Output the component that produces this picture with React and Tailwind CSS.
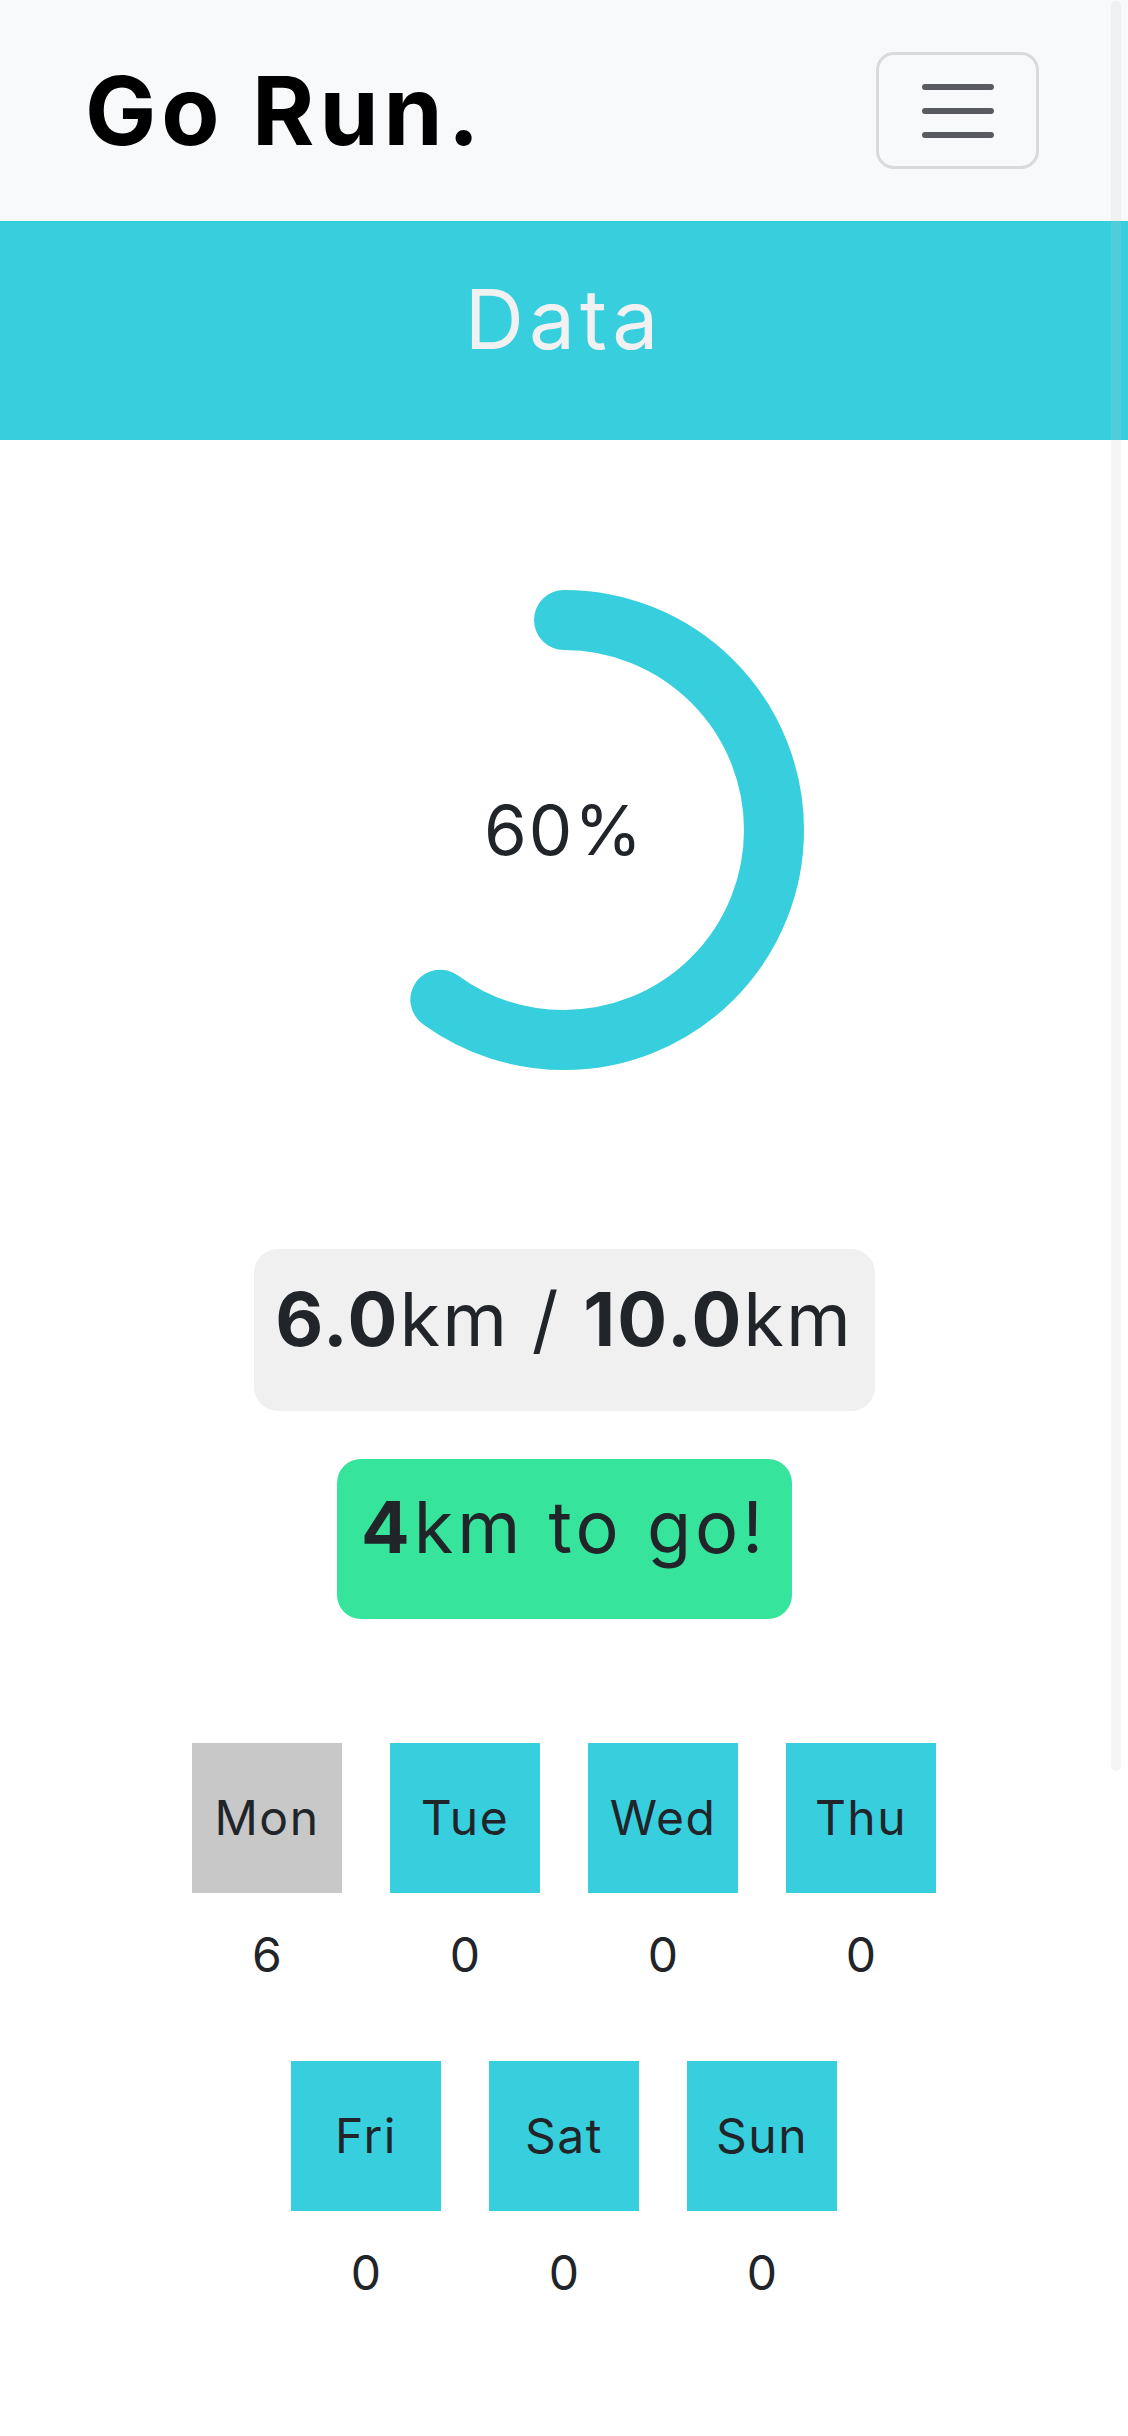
import React from "react";

const days = [
  { d: "Mon", v: 6, done: true },
  { d: "Tue", v: 0 },
  { d: "Wed", v: 0 },
  { d: "Thu", v: 0 },
  { d: "Fri", v: 0 },
  { d: "Sat", v: 0 },
  { d: "Sun", v: 0 },
];

function Ring() {
  const r = 210;
  const c = 2 * Math.PI * r;
  const pct = 0.6;
  return (
    <div className="relative mx-auto mt-[150px] h-[480px] w-[480px]">
      <svg width="480" height="480" viewBox="0 0 480 480" className="block">
        <circle
          cx="240"
          cy="240"
          r={r}
          fill="none"
          stroke="#37cfdd"
          strokeWidth="60"
          strokeLinecap="round"
          strokeDasharray={`${c * pct} ${c}`}
          transform="rotate(-90 240 240)"
        />
      </svg>
      <div className="absolute inset-0 flex items-center justify-center">
        <span className="text-[69px] leading-none tracking-[2px] text-[#212529]">60%</span>
      </div>
    </div>
  );
}

export default function App() {
  return (
    <div className="relative min-h-[2436px] w-full overflow-hidden bg-white font-[Inter,'Noto_Sans',sans-serif] text-[#212529]">
      {/* Navbar */}
      <header className="flex h-[221px] items-center justify-between bg-[#f8f9fa] pl-[85px] pr-[89px]">
        <span className="text-[95px] font-bold leading-[95px] tracking-[5px] text-black">Go Run.</span>
        <button className="flex h-[117px] w-[163px] items-center justify-center rounded-[18px] border-[3px] border-[#d9dadb]">
          <svg width="90" height="90" viewBox="0 0 30 30">
            <path
              d="M4 7h22M4 15h22M4 23h22"
              stroke="#585b5f"
              strokeWidth="2"
              strokeLinecap="round"
              fill="none"
            />
          </svg>
        </button>
      </header>

      {/* Title band */}
      <div className="h-[219px] bg-[#37cfdd] pt-[57px] text-center">
        <h1 className="text-[82px] font-normal leading-[84px] tracking-[5px] text-[#f1f1f1]">Data</h1>
      </div>

      <Ring />

      {/* Distance */}
      <div className="mx-auto mt-[179px] h-[162px] w-[621px] rounded-[24px] bg-[#f0f0f0] pt-[33px] text-center">
        <p className="text-[74px] leading-[74px] tracking-[2px] text-[#212529]">
          <span className="font-bold">6.0</span>km / <span className="font-bold">10.0</span>km
        </p>
      </div>

      {/* To go */}
      <div className="mx-auto mt-[48px] h-[160px] w-[455px] rounded-[24px] bg-[#36e49b] pt-[32px] text-center">
        <p className="text-[72px] leading-[72px] tracking-[4px] text-[#212529]">
          <span className="font-bold">4</span>km to go!
        </p>
      </div>

      {/* Week */}
      <div className="mx-auto mt-[124px] flex w-[800px] flex-wrap justify-center gap-x-[48px] gap-y-[70px]">
        {days.map((x) => (
          <div key={x.d} className="flex w-[150px] flex-col items-center">
            <div
              className={
                "flex h-[150px] w-[150px] items-center justify-center text-[48px] leading-none tracking-[1.5px] " +
                (x.done ? "bg-[#c8c8c8]" : "bg-[#37cfdd]")
              }
            >
              {x.d}
            </div>
            <p className="mt-[26px] text-[48px] leading-[72px]">{x.v}</p>
          </div>
        ))}
      </div>

      {/* overlay scrollbar */}
      <div className="absolute right-[7px] top-[1px] h-[1770px] w-[10px] rounded-full bg-[rgba(200,200,200,0.18)]" />
    </div>
  );
}
